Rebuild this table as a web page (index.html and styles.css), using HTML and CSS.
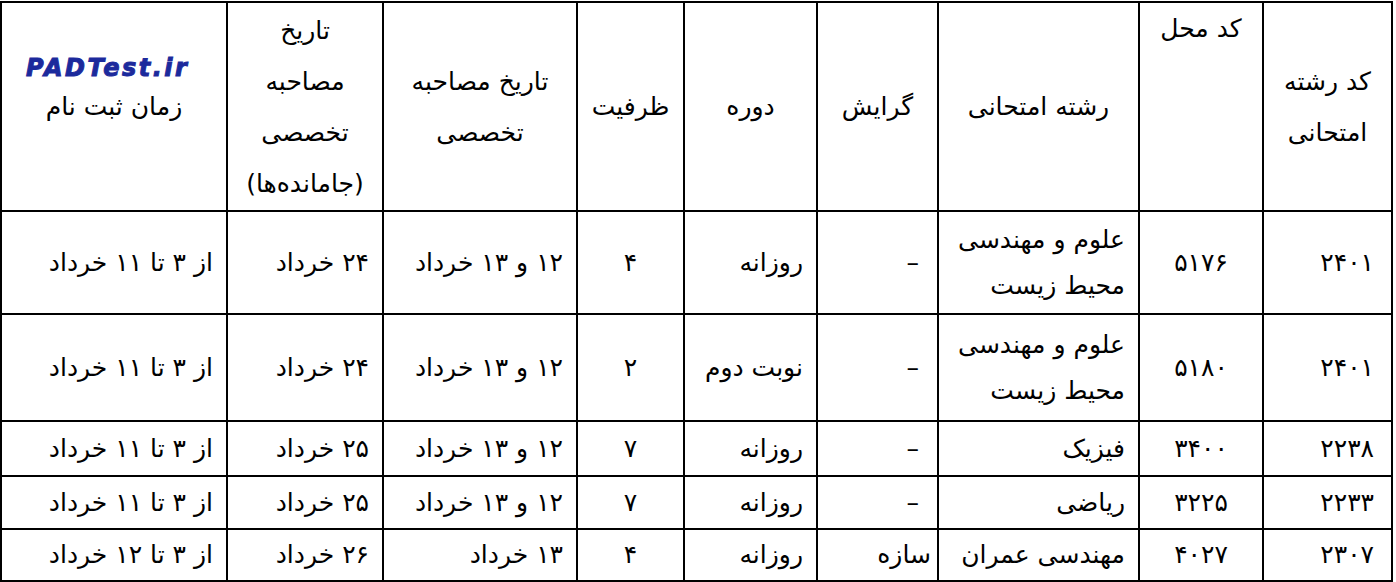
FILE: index.html
```html
<!DOCTYPE html>
<html lang="fa" dir="rtl">
<head>
<meta charset="utf-8">
<link rel="stylesheet" href="styles.css">
</head>
<body>
<table class="grid">
  <colgroup>
    <col class="c1"><col class="c2"><col class="c3"><col class="c4"><col class="c5"><col class="c6"><col class="c7"><col class="c8"><col class="c9">
  </colgroup>
  <tr class="head">
    <th>کد رشته<br>امتحانی</th>
    <th class="top">کد محل</th>
    <th>رشته امتحانی</th>
    <th>گرایش</th>
    <th>دوره</th>
    <th>ظرفیت</th>
    <th>تاریخ مصاحبه<br>تخصصی</th>
    <th>تاریخ<br>مصاحبه<br>تخصصی<br>(جامانده‌ها)</th>
    <th class="reg"><span class="logo" dir="ltr">PADTest.ir</span>زمان ثبت نام</th>
  </tr>
  <tr class="r2">
    <td class="code">۲۴۰۱</td>
    <td class="mid">۵۱۷۶</td>
    <td>علوم و مهندسی<br>محیط زیست</td>
    <td class="dash">–</td>
    <td>روزانه</td>
    <td class="mid">۴</td>
    <td>۱۲ و ۱۳ خرداد</td>
    <td>۲۴ خرداد</td>
    <td>از ۳ تا ۱۱ خرداد</td>
  </tr>
  <tr class="r3">
    <td class="code">۲۴۰۱</td>
    <td class="mid">۵۱۸۰</td>
    <td>علوم و مهندسی<br>محیط زیست</td>
    <td class="dash">–</td>
    <td>نوبت دوم</td>
    <td class="mid">۲</td>
    <td>۱۲ و ۱۳ خرداد</td>
    <td>۲۴ خرداد</td>
    <td>از ۳ تا ۱۱ خرداد</td>
  </tr>
  <tr class="r4">
    <td class="code">۲۲۳۸</td>
    <td class="mid">۳۴۰۰</td>
    <td>فیزیک</td>
    <td class="dash">–</td>
    <td>روزانه</td>
    <td class="mid">۷</td>
    <td>۱۲ و ۱۳ خرداد</td>
    <td>۲۵ خرداد</td>
    <td>از ۳ تا ۱۱ خرداد</td>
  </tr>
  <tr class="r5">
    <td class="code">۲۲۳۳</td>
    <td class="mid">۳۲۲۵</td>
    <td>ریاضی</td>
    <td class="dash">–</td>
    <td>روزانه</td>
    <td class="mid">۷</td>
    <td>۱۲ و ۱۳ خرداد</td>
    <td>۲۵ خرداد</td>
    <td>از ۳ تا ۱۱ خرداد</td>
  </tr>
  <tr class="r6">
    <td class="code">۲۳۰۷</td>
    <td class="mid">۴۰۲۷</td>
    <td>مهندسی عمران</td>
    <td class="sazeh">سازه</td>
    <td>روزانه</td>
    <td class="mid">۴</td>
    <td>۱۳ خرداد</td>
    <td>۲۶ خرداد</td>
    <td>از ۳ تا ۱۲ خرداد</td>
  </tr>
</table>
</body>
</html>
```

FILE: styles.css
```css
html, body {
  margin: 0;
  padding: 0;
  background: #ffffff;
}
body {
  padding: 1px 3px 0 2px;
  font-family: "DejaVu Sans", sans-serif;
  color: #000;
}
.grid {
  direction: rtl;
  border-collapse: collapse;
  table-layout: fixed;
  width: 1391px;
}
.c1 { width: 129px; }
.c2 { width: 124px; }
.c3 { width: 201px; }
.c4 { width: 121px; }
.c5 { width: 133px; }
.c6 { width: 107px; }
.c7 { width: 194px; }
.c8 { width: 156px; }
.c9 { width: 226px; }
.grid th, .grid td {
  border: 2px solid #000;
  padding: 0 13px;
  vertical-align: middle;
}
.grid th {
  font-weight: normal;
  font-size: 25px;
  line-height: 51px;
  text-align: center;
  padding: 0 2px;
}
.grid th.top {
  vertical-align: top;
}
.grid th.reg {
  position: relative;
}
.logo {
  position: absolute;
  top: 52px;
  left: 24px;
  font-family: "DejaVu Sans", sans-serif;
  font-weight: bold;
  font-style: italic;
  font-size: 24px;
  line-height: 26px;
  color: #1c2a9c;
  letter-spacing: 2.5px;
  -webkit-text-stroke: 1px #1c2a9c;
}
.grid td {
  font-size: 25px;
  line-height: 46px;
  text-align: right;
}
.grid td.mid { text-align: center; }
.grid td.code { padding-right: 17px; }
.grid td.dash { padding-right: 18px; }
.grid td.sazeh { padding-right: 6px; }
.head { height: 209px; }
.r2 { height: 103px; }
.r3 { height: 107px; }
.r4 { height: 55px; }
.r5 { height: 53px; }
.r6 { height: 52px; }
```
